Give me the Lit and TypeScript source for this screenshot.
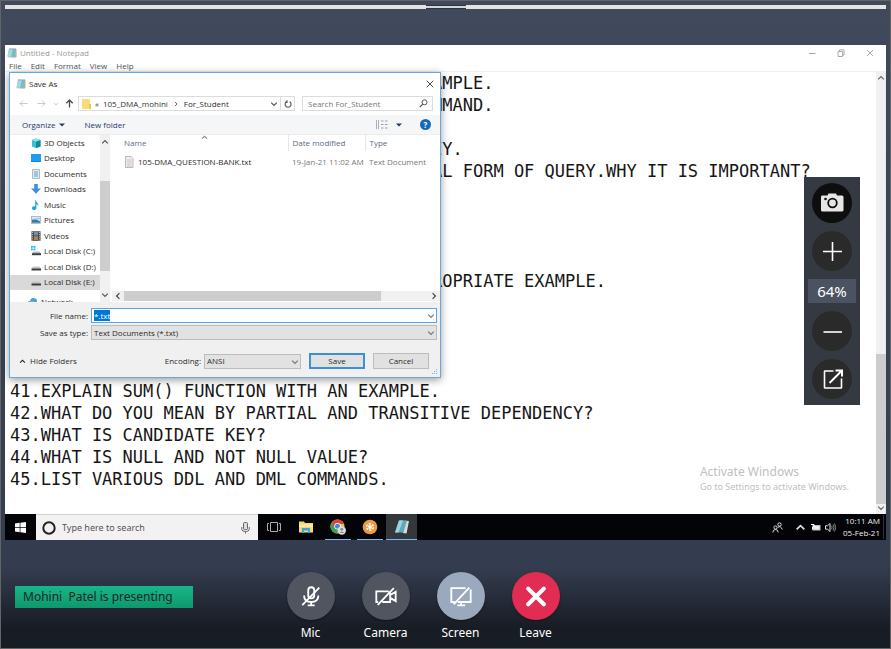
import { LitElement, html, css, svg } from "lit";
import { customElement, query } from "lit/decorators.js";

const chevron = (cls: string, d: string) =>
  html`<svg class=${cls} viewBox="0 0 8 8" aria-hidden="true"><path d=${d} fill="none" stroke="currentColor" stroke-width="1.2"/></svg>`;
const DOWN = "M1.2 2.6 4 5.4 6.8 2.6";
const UP = "M1.2 5.4 4 2.6 6.8 5.4";
const LEFT = "M5.4 1.2 2.6 4 5.4 6.8";
const RIGHT = "M2.6 1.2 5.4 4 2.6 6.8";

const notepadIcon = html`<svg class="app-icon" viewBox="0 0 12 12" aria-hidden="true">
  <path d="M3 1 11.400.8 11.600 10.400 9.800 11.600 1.400 11Z" fill="#b9b3a0"/>
  <path d="M2.400.8 10.600.8 9.600 10.600.6 10.200Z" fill="#79bccb"/>
  <path d="M2.400.8 7 .8 5 10.400.6 10.200Z" fill="#a5d8e0"/>
  <path d="M2.600 1.200H10.400" stroke="#5c8b96" stroke-width=".8" stroke-dasharray=".8 .6"/></svg>`;

const treeIcons: Record<string, unknown> = {
  cube: svg`<path d="M1 2 5 .5 9.500 2V8.500L5 10 1 8.500Z" fill="#35c3d6"/><path d="M5 3.500 9.500 2V8.500L5 10Z" fill="#128aa0"/><path d="M1 2 5 .5 9.500 2 5 3.500Z" fill="#8be6ee"/>`,
  desktop: svg`<rect x="0" y="1" width="10" height="8" fill="#0d84d8"/><rect x="0" y="1" width="10" height="7" fill="#1c9df0"/>`,
  doc: svg`<path d="M1.500.5H8.500V9.500H1.500Z" fill="#dfeaf0" stroke="#8fa3ad" stroke-width=".7"/><path d="M3 3H7M3 5H7M3 7H7" stroke="#4d9dbf" stroke-width=".9"/>`,
  down: svg`<path d="M3.200 0H6.800V4.500H10L5 9.800 0 4.500H3.200Z" fill="#3f8fdc"/>`,
  music: svg`<path d="M4.600 0C5 2.500 8 3 7.200 6.500 7 4.800 6 4.300 5.400 4.200V8A2.200 1.800 0 1 1 4.200 6.500V0Z" fill="#1ba1e8"/>`,
  picture: svg`<rect x=".4" y="1.400" width="9.200" height="7" fill="#d9e8f2" stroke="#9aa7b0" stroke-width=".7"/><path d="M1 7.800V5L4 4 9 6.200V7.800Z" fill="#3b7aa6"/><path d="M1 4.500 9 3.500" stroke="#8cc3e2" stroke-width="1"/>`,
  video: svg`<rect x=".5" y=".3" width="9" height="9.500" fill="#3c4043"/><path d="M1.500 1V9.500M8.500 1V9.500" stroke="#c9ced2" stroke-width=".9" stroke-dasharray="1 .9"/><rect x="2.800" y="1" width="4.400" height="3.500" fill="#6f8fb5"/><rect x="2.800" y="5.200" width="4.400" height="3.800" fill="#a5874f"/>`,
  windisk: svg`<path d="M0 0H1.800V1.800H0ZM2.400 0H4.400V1.800H2.400ZM0 2.400H1.800V4.200H0ZM2.400 2.400H4.400V4.200H2.400Z" fill="#19b5ea"/><path d="M2.500 5.500H8.500L10 7.500H1Z" fill="#b5b8ba"/><rect x="1" y="7.200" width="9" height="2" fill="#3b3e40"/>`,
  disk: svg`<path d="M2 4.500H8.500L10 6.800H.5Z" fill="#c2c5c7"/><rect x=".5" y="6.500" width="9.500" height="2" fill="#3b3e40"/>`,
  network: svg`<circle cx="5.500" cy="4.500" r="3.500" fill="#4aa3c9"/><rect x="0" y="4" width="6" height="4" fill="#8aa8b8"/>`,
};

const TREE: Array<[string, string]> = [
  ["cube", "3D Objects"],
  ["desktop", "Desktop"],
  ["doc", "Documents"],
  ["down", "Downloads"],
  ["music", "Music"],
  ["picture", "Pictures"],
  ["video", "Videos"],
  ["windisk", "Local Disk (C:)"],
  ["disk", "Local Disk (D:)"],
  ["disk", "Local Disk (E:)"],
];

const base = css`
  * { box-sizing: border-box; }
  button, input, select {
    font: inherit; color: inherit; margin: 0; padding: 0; border: 0;
    background: none; border-radius: 0; outline: none;
  }
  button { display: flex; align-items: center; justify-content: center; }
  svg { display: block; flex: none; }
  .app-icon { width: 10px; height: 10px; }
  .arrow { width: 8px; height: 8px; }
`;

@customElement("save-dialog")
export class SaveDialog extends LitElement {
  @query(".name-input") nameInput!: HTMLInputElement;

  firstUpdated() {
    this.nameInput.focus();
    this.nameInput.select();
  }

  static styles = [base, css`
    :host {
      display: flex; flex-direction: column; width: 432px; background: #fff;
      border: 1px solid #66a7e0; box-shadow: 0 2px 8px rgba(0, 0, 0, .4);
      font: 8px/12px "Open Sans", "Noto Sans", sans-serif; color: #2b2b2b;
    }
    .title { display: flex; align-items: center; height: 21px; padding: 0 5px 0 6px; gap: 3px; }
    .title .close { margin-left: auto; width: 10px; height: 10px; }
    .close svg { width: 8px; height: 8px; }
    .nav { display: flex; align-items: center; height: 21px; padding: 0 7px 2px 4px; }
    .nav-btn { width: 18px; height: 14px; color: #c9c9c9; }
    .nav-btn svg { width: 9px; height: 9px; }
    .nav-btn.small { width: 12px; }
    .nav-btn.small svg { width: 6px; height: 6px; }
    .nav-btn.up { color: #4a4a4a; width: 14px; margin-right: 2px; }
    .address {
      display: flex; align-items: center; flex: 1; height: 15px; gap: 4px;
      border: 1px solid #dcdcdc; padding-left: 3px; color: #303030;
    }
    .address .folder { width: 9px; height: 10px; }
    .address .sep { width: 6px; height: 6px; color: #555; margin: 0 1px; }
    .crumb-menu { margin-left: auto; width: 12px; height: 13px; color: #555; }
    .refresh { width: 14px; height: 15px; border: 1px solid #dcdcdc; border-left: 0; color: #555; }
    .refresh svg { width: 8px; height: 8px; }
    .search {
      display: flex; align-items: center; width: 131px; height: 15px; margin-left: 7px;
      border: 1px solid #dcdcdc; padding: 0 4px 0 5px; color: #666;
    }
    .search input { flex: 1; min-width: 0; height: 12px; }
    .search input::placeholder { color: #777; opacity: 1; }
    .search svg { width: 9px; height: 9px; }
    .tools {
      display: flex; align-items: center; height: 20px; padding: 0 9px 0 12px;
      background: #f5f6f7; border-bottom: 1px solid #ececec; color: #26396a;
    }
    .tools button { gap: 4px; }
    .tools .new { margin-left: 19px; }
    .tools .view { margin-left: auto; gap: 8px; color: #1e3c66; }
    .view .rows { width: 12px; height: 9px; }
    .caret { width: 6px; height: 4px; }
    .tools .help {
      margin-left: 18px; width: 11px; height: 11px; border-radius: 50%;
      background: #1668b8; color: #fff; font-weight: 700;
    }
    .body { display: flex; height: 167px; }
    .tree { width: 90px; overflow: hidden; }
    .places { display: flex; flex-direction: column; height: 155px; margin: 0; padding: 0; list-style: none; }
    .place { display: flex; align-items: center; flex: 1; gap: 3px; padding-left: 21px; white-space: nowrap; }
    .place.selected { background: #d9d9d9; }
    .place svg { width: 10px; height: 10px; }
    .place.cut { height: 16px; padding-top: 7px; padding-left: 18px; }
    .vbar { display: flex; flex-direction: column; align-items: center; width: 10px; background: #f0f0f0; padding: 3px 0; color: #555; }
    .vbar .before { flex: 35; }
    .vbar .thumb { flex: 90; width: 10px; background: #cdcdcd; }
    .vbar .after { flex: 20; }
    .files { display: flex; flex-direction: column; flex: 1; min-width: 0; padding-left: 2px; }
    table { width: 100%; border-collapse: collapse; table-layout: fixed; }
    th, td { text-align: left; font-weight: 400; padding: 0 0 0 4px; white-space: nowrap; }
    th { height: 16px; color: #5a6a85; border-right: 1px solid #e5e5e5; }
    th:last-child { border-right: 0; }
    th:first-child, td:first-child { padding-left: 12px; }
    td { height: 22px; color: #777; }
    .c-name { width: 176px; }
    .c-date { width: 77px; }
    .sorted { position: relative; }
    .sort { position: absolute; left: 89px; top: -1px; width: 7px; height: 7px; color: #888; }
    .file { display: flex; align-items: center; gap: 4px; color: #2b2b2b; }
    .file svg { width: 10px; height: 12px; }
    .hbar { display: flex; align-items: center; height: 10px; margin-top: auto; margin-bottom: 1px; background: #f0f0f0; color: #444; padding: 0 2px; }
    .hbar .thumb { flex: 257; height: 10px; margin-left: 2px; background: #cdcdcd; }
    .hbar .after { flex: 49; }
    .form { display: flex; flex-direction: column; background: #f0f0f0; padding: 6px 3px 8px 9px; }
    .field { display: grid; grid-template-columns: 69px 1fr; column-gap: 3px; align-items: center; margin-bottom: 2px; }
    .field label { text-align: right; }
    .combo { position: relative; display: flex; height: 15px; border: 1px solid #bcbcbc; background: #e2e2e2; }
    .combo.name { border-color: #5aa5e6; background: #fff; }
    .combo input, .combo select { flex: 1; min-width: 0; appearance: none; padding: 0 3px 0 2px; height: 13px; line-height: 12px; }
    .combo .arrow { position: absolute; right: 1px; top: 3px; color: #777; pointer-events: none; }
    .name-input::selection { background: #0078d7; color: #fff; }
    .actions { display: flex; align-items: center; margin-top: 11px; padding-right: 8px; }
    .hide { gap: 4px; }
    .hide svg { width: 7px; height: 7px; }
    .enc { margin-left: auto; margin-right: 3px; }
    .combo.encoding { width: 97px; margin-right: 8px; }
    .push { width: 56px; height: 16px; border: 1px solid #bcbcbc; background: #e1e1e1; }
    .push.primary { border: 2px solid #3b8fdd; margin-right: 8px; }
    .grip { position: absolute; right: 2px; bottom: 2px; width: 6px; height: 6px; }
  `];

  render() {
    return html`
      <div class="title">${notepadIcon}<span>Save As</span>
        <button class="close" aria-label="Close"><svg viewBox="0 0 8 8"><path d="M.7.7 7.300 7.300M7.300.7.7 7.300" stroke="#444" stroke-width="1"/></svg></button>
      </div>
      <div class="nav">
        <button class="nav-btn" aria-label="Back"><svg viewBox="0 0 9 9"><path d="M8.500 4.500H1M4 1.500 1 4.500 4 7.500" fill="none" stroke="currentColor"/></svg></button>
        <button class="nav-btn" aria-label="Forward"><svg viewBox="0 0 9 9"><path d="M.5 4.500H8M5 1.500 8 4.500 5 7.500" fill="none" stroke="currentColor"/></svg></button>
        <button class="nav-btn small" aria-label="Recent">${chevron("arrow", DOWN)}</button>
        <button class="nav-btn up" aria-label="Up"><svg viewBox="0 0 9 9"><path d="M4.500 8.500V1M1.300 4.300 4.500 1 7.700 4.300" fill="none" stroke="currentColor" stroke-width="1.300"/></svg></button>
        <div class="address">
          <svg class="folder" viewBox="0 0 9 10"><path d="M0 0H8V10H0Z" fill="#fbdc77"/><path d="M7 5H9V10H7Z" fill="#f0c452"/></svg>
          <span>«</span><span>105_DMA_mohini</span>
          ${chevron("sep", RIGHT)}<span>For_Student</span>
          <button class="crumb-menu" aria-label="Previous locations">${chevron("arrow", DOWN)}</button>
        </div>
        <button class="refresh" aria-label="Refresh"><svg viewBox="0 0 8 8"><path d="M2.500 1.700A3 3 0 1 0 5.800 1.800M3 .3V2.400H1" fill="none" stroke="currentColor" stroke-width="1.100"/></svg></button>
        <div class="search"><input aria-label="Search For_Student" placeholder="Search For_Student">
          <svg viewBox="0 0 9 9"><circle cx="5.500" cy="3.300" r="2.500" fill="none" stroke="#555"/><path d="M3.700 5.200.8 8.200" stroke="#555" stroke-width="1.200"/></svg></div>
      </div>
      <div class="tools">
        <button>Organize <svg class="caret" viewBox="0 0 6 4"><path d="M0 .5H6L3 3.500Z" fill="currentColor"/></svg></button>
        <button class="new">New folder</button>
        <button class="view" aria-label="Change view">
          <svg class="rows" viewBox="0 0 12 9"><path d="M.5 0V9M2.500 0V9" stroke="#aab0b8"/><path d="M5 1H7.500M5 4.500H7.500M5 8H7.500M9 1H11.500M9 4.500H11.500M9 8H11.500" stroke="#98a0aa"/></svg>
          <svg class="caret" viewBox="0 0 6 4"><path d="M0 .5H6L3 3.500Z" fill="currentColor"/></svg></button>
        <button class="help" aria-label="Help">?</button>
      </div>
      <div class="body">
        <div class="tree">
          <ul class="places">${TREE.map(([icon, name], i) => html`
            <li class="place ${i === TREE.length - 1 ? "selected" : ""}"><svg viewBox="0 0 10 10">${treeIcons[icon]}</svg>${name}</li>`)}
          </ul>
          <div class="place cut"><svg viewBox="0 0 10 10">${treeIcons.network}</svg>Network</div>
        </div>
        <div class="vbar">${chevron("arrow", UP)}<div class="before"></div><div class="thumb"></div><div class="after"></div>${chevron("arrow", DOWN)}</div>
        <div class="files">
          <table>
            <colgroup><col class="c-name"><col class="c-date"><col></colgroup>
            <thead><tr><th class="sorted">Name${chevron("sort", UP)}</th><th>Date modified</th><th>Type</th></tr></thead>
            <tbody><tr>
              <td><div class="file"><svg viewBox="0 0 10 12"><path d="M1.500.5H7L9 2.500V11.500H1.500Z" fill="#eee" stroke="#aaa" stroke-width=".8"/><path d="M3 4H7.500M3 6H7.500M3 8H7.500M3 10H7.500" stroke="#bbb" stroke-width=".8"/></svg>105-DMA_QUESTION-BANK.txt</div></td>
              <td>19-Jan-21 11:02 AM</td><td>Text Document</td></tr></tbody>
          </table>
          <div class="hbar">${chevron("arrow", LEFT)}<div class="thumb"></div><div class="after"></div>${chevron("arrow", RIGHT)}</div>
        </div>
      </div>
      <div class="form">
        <div class="field"><label for="fname">File name:</label>
          <div class="combo name"><input id="fname" class="name-input" value="*.txt">${chevron("arrow", DOWN)}</div></div>
        <div class="field"><label for="ftype">Save as type:</label>
          <div class="combo"><select id="ftype"><option>Text Documents (*.txt)</option></select>${chevron("arrow", DOWN)}</div></div>
        <div class="actions">
          <button class="hide">${chevron("arrow", UP)}Hide Folders</button>
          <label class="enc" for="enc">Encoding:</label>
          <div class="combo encoding"><select id="enc"><option>ANSI</option></select>${chevron("arrow", DOWN)}</div>
          <button class="push primary">Save</button>
          <button class="push">Cancel</button>
        </div>
      </div>
      <svg class="grip" viewBox="0 0 6 6"><path d="M4 0H5V1H4ZM4 2H5V3H4ZM2 2H3V3H2ZM4 4H5V5H4ZM2 4H3V5H2ZM0 4H1V5H0Z" fill="#aaa"/></svg>
    `;
  }
}

// Rows beside the dialog hold only the part of the line in view; the rest are whole lines.
const BESIDE = [
  "AMPLE.", "MMAND.", "", "EY.", "AL FORM OF QUERY.WHY IT IS IMPORTANT?",
  "", "", "", "", "ROPRIATE EXAMPLE.", "", "", "", "",
].join("\n");
const BELOW = [
  "41.EXPLAIN SUM() FUNCTION WITH AN EXAMPLE.",
  "42.WHAT DO YOU MEAN BY PARTIAL AND TRANSITIVE DEPENDENCY?",
  "43.WHAT IS CANDIDATE KEY?",
  "44.WHAT IS NULL AND NOT NULL VALUE?",
  "45.LIST VARIOUS DDL AND DML COMMANDS.",
].join("\n");

@customElement("shared-screen")
export class SharedScreen extends LitElement {
  static styles = [base, css`
    :host {
      position: relative; display: flex; flex-direction: column; background: #fff;
      font: 8px/12px "Open Sans", "Noto Sans", sans-serif; color: #555;
    }
    .title { display: flex; align-items: center; height: 15px; padding: 0 12px 0 2px; gap: 3px; color: #999; }
    .win { width: 9px; height: 9px; color: #aaa; margin-left: 17px; }
    .win:first-of-type { margin-left: auto; }
    .win svg { width: 8px; height: 8px; }
    .menu { display: flex; align-items: center; height: 12px; gap: 9px; padding-left: 4px; border-bottom: 1px solid #f0f0f0; }
    .editor { display: flex; }
    .text { flex: 1; min-width: 0; padding: 0 0 24px 5px; }
    pre { margin: 0; height: 110px; font: 17px/22px "DejaVu Sans Mono", monospace; color: #161616; }
    .beside { height: 308px; padding-left: 422px; }
    .vbar { display: flex; flex-direction: column; align-items: center; width: 10px; background: #f0f0f0; padding: 2px 0; color: #666; border-right: 1px solid #e4e9f2; }
    .vbar .before { flex: 272; }
    .vbar .thumb { flex: 150; width: 10px; background: #cdcdcd; }
    save-dialog { position: absolute; left: 4px; top: 27px; }
    .watermark { position: absolute; right: 37px; bottom: 46px; color: #c0c0c0; font: 9px/14px "Noto Sans", sans-serif; }
    .watermark b { display: block; font-size: 12px; line-height: 16px; font-weight: 400; }
    .taskbar { display: flex; height: 26px; background: #020408; color: #ddd; }
    .task { position: relative; width: 32px; }
    .task svg { width: 16px; height: 16px; }
    .start { width: 31px; }
    .start svg { width: 11px; height: 11px; }
    .open { border-bottom: 1px solid #76b9ed; padding-top: 1px; width: 26px; margin: 0 3px; }
    .active { background: #34383c; border-bottom: 1px solid #76b9ed; width: 31px; margin-left: 0; }
    .find { display: flex; align-items: center; width: 222px; gap: 6px; padding: 0 8px 0 6px; background: #f2f2f2; border-top: 1px solid #d0d0d0; color: #555; }
    .find svg { width: 14px; height: 14px; }
    .find .mic { width: 9px; height: 12px; }
    .find input { flex: 1; min-width: 0; font: 9px/14px "Noto Sans", sans-serif; }
    .find input::placeholder { color: #555; opacity: 1; }
    .tray { display: flex; align-items: center; margin-left: auto; gap: 4px; padding-right: 2px; }
    .tray svg { width: 11px; height: 11px; }
    .tray .people { margin-right: 8px; }
    .clock { text-align: right; line-height: 12px; font-size: 8px; margin-left: 3px; padding-right: 3px; border-right: 1px solid #333; color: #eee; }
  `];

  render() {
    return html`
      <div class="title">${notepadIcon}<span>Untitled - Notepad</span>
        <button class="win" aria-label="Minimize"><svg viewBox="0 0 8 8"><path d="M1 4.500H7.500" stroke="currentColor"/></svg></button>
        <button class="win" aria-label="Restore"><svg viewBox="0 0 8 8"><path d="M1 2.500H5.500V7.500H1ZM2.500 2.500V.8H7V6H5.500" fill="none" stroke="currentColor"/></svg></button>
        <button class="win" aria-label="Close"><svg viewBox="0 0 8 8"><path d="M1 1 7 7M7 1 1 7" stroke="currentColor"/></svg></button>
      </div>
      <nav class="menu"><span>File</span><span>Edit</span><span>Format</span><span>View</span><span>Help</span></nav>
      <div class="editor">
        <div class="text"><pre class="beside">${BESIDE}</pre><pre>${BELOW}</pre></div>
        <div class="vbar">${chevron("arrow", UP)}<div class="before"></div><div class="thumb"></div>${chevron("arrow", DOWN)}</div>
      </div>
      <div class="taskbar">
        <button class="task start" aria-label="Start"><svg viewBox="0 0 11 11"><path d="M0 1.500 4.700.8V5.200H0ZM5.400.7 11 0V5.200H5.400ZM0 5.900H4.700V10.200L0 9.500ZM5.400 5.900H11V11L5.400 10.300Z" fill="#fff"/></svg></button>
        <div class="find"><svg viewBox="0 0 14 14"><circle cx="7" cy="7" r="5.700" fill="none" stroke="#222" stroke-width="2"/></svg>
          <input aria-label="Type here to search" placeholder="Type here to search">
          <svg class="mic" viewBox="0 0 9 12"><rect x="2.500" y=".5" width="4" height="7" rx="1" fill="#ddd" stroke="#666"/><path d="M.8 5V7.500Q1 9.500 4.500 9.500T8.200 7.500V5M4.500 9.500V11.500" fill="none" stroke="#666"/></svg></div>
        <button class="task" aria-label="Task view"><svg viewBox="0 0 16 16"><path d="M4.500 3.500H11.500V12.500H4.500ZM3 4.500H1.500V11.500H3M13 4.500H14.500V11.500H13" fill="none" stroke="#aaa"/></svg></button>
        <button class="task" aria-label="File Explorer"><svg viewBox="0 0 16 16"><path d="M1 2.500H6L7 4H15V13.500H1Z" fill="#f7d56f"/><path d="M1 5.500H15V8H1Z" fill="#fdeaa8"/><path d="M4 14V9H12V14H10V11.500H6V14Z" fill="#3aa6de"/></svg></button>
        <button class="task open" aria-label="Chrome"><svg viewBox="0 0 16 16">
          <circle cx="7.500" cy="7.500" r="7" fill="#f5c33b"/><path d="M1.400 4A7 7 0 0 1 14 5H7.500L4.500 9Z" fill="#dc4437"/><path d="M1.400 4A7 7 0 0 0 7 14.500L9.500 10H6Z" fill="#3d9e56"/>
          <circle cx="7.500" cy="7.300" r="3.200" fill="#fff"/><circle cx="7.500" cy="7.300" r="2.500" fill="#4485e8"/>
          <circle cx="11.800" cy="11.500" r="4.200" fill="#dcdcdc"/><circle cx="11.800" cy="10.300" r="1.400" fill="#888"/><path d="M9.300 14Q11.800 10.800 14.300 14Z" fill="#888"/></svg></button>
        <button class="task open" aria-label="Meeting"><svg viewBox="0 0 16 16"><circle cx="8" cy="8" r="7.300" fill="#f09a3c"/><path d="M8 4V12M4.500 6 11.500 10M11.500 6 4.500 10" stroke="#fff" stroke-width="1.200"/><circle cx="8" cy="8" r="3.600" fill="none" stroke="#fff" stroke-width=".9" stroke-dasharray="2 1.770"/></svg></button>
        <button class="task active" aria-label="Notepad"><svg viewBox="0 0 16 16"><path d="M6 1.500 15 2 12.500 14.500 9 14Z" fill="#d8dcda"/><path d="M5 1.500H13L9.500 13.500H1Z" fill="#5ea9bd"/><path d="M5 1.500H9L4.500 13.500H1Z" fill="#9ed2dc"/></svg></button>
        <div class="tray">
          <svg class="people" viewBox="0 0 11 11"><circle cx="3.500" cy="5.500" r="1.600" fill="none" stroke="#ddd"/><path d="M.8 10.500Q1 7.500 3.500 7.500T6.200 10.500" fill="none" stroke="#ddd"/><circle cx="7.500" cy="2.500" r="1.700" fill="none" stroke="#ddd"/><path d="M5.800 5.500Q8.500 3 10.300 7.500" fill="none" stroke="#ddd"/></svg>
          ${chevron("up", UP)}
          <svg viewBox="0 0 11 11"><rect x="3" y="3.500" width="7" height="4.500" fill="#eee" stroke="#bbb"/><path d="M1 2.500H4V5H2.500V7.500" fill="none" stroke="#fff"/></svg>
          <svg viewBox="0 0 11 11"><path d="M.5 3.800H2.500L5 1.500V9.500L2.500 7.200H.5Z" fill="none" stroke="#ddd"/><path d="M6.500 3.800Q7.700 5.500 6.500 7.200M8 2.500Q10 5.500 8 8.500M9.500 1.500Q12 5.500 9.500 9.500" fill="none" stroke="#aaa" stroke-width=".8"/></svg>
          <div class="clock">10:11 AM<br>05-Feb-21</div>
        </div>
      </div>
      <div class="watermark"><b>Activate Windows</b>Go to Settings to activate Windows.</div>
      <save-dialog></save-dialog>
    `;
  }
}

@customElement("app-root")
export class AppRoot extends LitElement {
  static styles = [base, css`
    :host {
      display: flex; flex-direction: column; box-sizing: border-box; min-height: 100vh;
      border: 1px solid #646464; background: linear-gradient(#41495d, #323b4d);
      font: 12px/16px "Noto Sans", "Open Sans", sans-serif; color: #fff;
    }
    .rail { display: flex; justify-content: center; height: 4px; margin: 4px 4px 36px; background: #e6e4e2; }
    .handle { width: 40px; height: 4px; border: solid #2e3442; border-width: 1px 0; background: #d5d6d8; }
    .stage { position: relative; margin: 0 4px; }
    .zoom {
      position: absolute; right: 26px; top: 132px; width: 56px; padding: 6px 4px;
      display: flex; flex-direction: column; align-items: center; gap: 8px; background: #353a42;
    }
    .round { width: 40px; height: 40px; border-radius: 50%; background: #2a2a2a; }
    .round.dark { background: #0e0e0e; }
    .round svg { width: 24px; height: 24px; }
    .level { width: 48px; height: 24px; line-height: 24px; text-align: center; background: #4b5362; font-size: 15px; }
    .controls {
      display: flex; flex: 1; align-items: flex-start; padding: 32px 14px 6px;
      background: linear-gradient(transparent 28px, #181c24 88px);
    }
    .who {
      width: 178px; height: 22px; line-height: 22px; margin-top: 14px; padding-left: 8px; white-space: pre;
      background: linear-gradient(#18b687, #0f976d); color: #16282c; font-size: 12px;
    }
    .buttons { display: flex; margin-left: 80px; }
    .ctl { width: 75px; flex-direction: column; gap: 5px; color: #fff; }
    .disc {
      display: flex; align-items: center; justify-content: center; width: 48px; height: 48px;
      border-radius: 50%; background: #50555f; box-shadow: 0 1px 2px rgba(0, 0, 0, .4);
    }
    .disc.screen { background: #9aa9bd; }
    .disc.leave { background: #e12d53; }
    .disc svg { width: 24px; height: 24px; fill: none; stroke: #fff; stroke-width: 2; }
  `];

  render() {
    return html`
      <div class="rail"><div class="handle"></div></div>
      <main class="stage">
        <shared-screen></shared-screen>
        <div class="zoom">
          <button class="round dark" aria-label="Snapshot"><svg viewBox="0 0 24 24"><path d="M2 4.500H7.500L8.500 2.500H16L17 4.500H22Q23.500 4.500 23.500 6V19Q23.500 20.500 22 20.500H2.500Q1 20.500 1 19V6Q1 4.500 2 4.500Z" fill="#e6e6e6"/><circle cx="12.500" cy="12" r="4.300" fill="none" stroke="#0e0e0e" stroke-width="1.800"/><circle cx="5.500" cy="8" r="1.300" fill="#0e0e0e"/></svg></button>
          <button class="round" aria-label="Zoom in"><svg viewBox="0 0 24 24"><path d="M12.500 3V22M3 12.500H22" stroke="#fff" stroke-width="1.600"/></svg></button>
          <span class="level">64%</span>
          <button class="round" aria-label="Zoom out"><svg viewBox="0 0 24 24"><path d="M3.500 13H22" stroke="#fff" stroke-width="1.600"/></svg></button>
          <button class="round" aria-label="Pop out"><svg viewBox="0 0 24 24"><path d="M13.500 4H5Q4.500 4 4.500 4.500V20.500Q4.500 21 5 21H21Q21.500 21 21.500 20.500V11.500" fill="none" stroke="#fff" stroke-width="1.600"/><path d="M9.500 16 21.500 4M15.500 3.500H22V9.500" fill="none" stroke="#fff" stroke-width="2"/></svg></button>
        </div>
      </main>
      <footer class="controls">
        <div class="who">Mohini  Patel is presenting</div>
        <div class="buttons">
          <button class="ctl"><span class="disc"><svg viewBox="0 0 26 26"><rect x="10" y="3.500" width="6.500" height="12" rx="3.250"/><path d="M5.500 12.500Q5.500 19.500 13.200 19.500T21 12.500M13.200 19.500V23M9.500 23.200H17M22 4 3.500 23"/></svg></span>Mic</button>
          <button class="ctl"><span class="disc"><svg viewBox="0 0 26 26"><path d="M17.500 7.500V19.500H9M4.500 19.500H2.500V8H16M17.500 12 23.500 8.500V18.500L17.500 15M21.500 4.500 4 22.500"/></svg></span>Camera</button>
          <button class="ctl"><span class="disc screen"><svg viewBox="0 0 26 26"><path d="M18 4.500H2.500V19.500H6M9.500 19.500H23.500V6M13 19.500V23M9 23.200H17.500M22 4 5 22"/></svg></span>Screen</button>
          <button class="ctl"><span class="disc leave"><svg viewBox="0 0 26 26"><path d="M4.500 5 21.500 22M21.500 5 4.500 22" stroke-width="4.500" stroke-linecap="round"/></svg></span>Leave</button>
        </div>
      </footer>
    `;
  }
}
